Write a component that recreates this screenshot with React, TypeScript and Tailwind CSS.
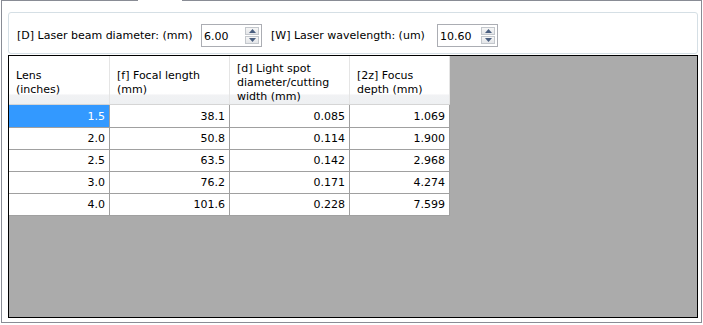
import React from "react";

const rows = [
  ["1.5", "38.1", "0.085", "1.069"],
  ["2.0", "50.8", "0.114", "1.900"],
  ["2.5", "63.5", "0.142", "2.968"],
  ["3.0", "76.2", "0.171", "4.274"],
  ["4.0", "101.6", "0.228", "7.599"],
];

const widths = ["w-[101px]", "w-[120px]", "w-[120px]", "w-[100px]"];

function Arrow({ up }: { up: boolean }) {
  return (
    <svg width="7" height="4" viewBox="0 0 7 4">
      {up ? (
        <polygon points="0,4 7,4 3.5,0" fill="#4a5f80" />
      ) : (
        <polygon points="0,0 7,0 3.5,4" fill="#4a5f80" />
      )}
    </svg>
  );
}

function Spin({ value }: { value: string }) {
  return (
    <div className="h-[23px] w-[61px] border border-[#abadb3] bg-white flex items-center pl-[2px] pr-[2px]">
      <div className="flex-1 leading-none pt-px">{value}</div>
      <div className="flex flex-col w-[14px] h-[17px]">
        <div className="h-[8px] border border-[#c3c7cc] bg-[linear-gradient(to_bottom,#f6f6f6,#e3e5e8)] flex items-center justify-center">
          <Arrow up />
        </div>
        <div className="h-px" />
        <div className="h-[8px] border border-[#c3c7cc] bg-[linear-gradient(to_bottom,#f6f6f6,#e3e5e8)] flex items-center justify-center">
          <Arrow up={false} />
        </div>
      </div>
    </div>
  );
}

export default function App() {
  return (
    <div className="w-[703px] h-[325px] bg-white relative font-['DejaVu_Sans',sans-serif] text-[11px] text-black">
      <div className="absolute top-0 left-[138px] w-[44px] h-px bg-white" />
      <div className="ml-px w-[701px] h-[323px] border border-[#898c95] flex flex-col pl-[6px] pt-[11px]">
        <div className="h-[42px] w-[690px] border border-[#d5dfe5] rounded-[3px] flex items-start pt-[11px] pl-[8px]">
          <div className="w-[184px] h-[23px] flex items-center pt-px">[D] Laser beam diameter: (mm)</div>
          <Spin value="6.00" />
          <div className="ml-[9px] w-[166px] h-[23px] flex items-center pt-px">[W] Laser wavelength: (um)</div>
          <Spin value="10.60" />
        </div>
        <div className="mt-px h-[263px] w-[690px] border border-black bg-[#ababab]">
          <div className="flex h-[49px] w-[441px] border-b border-[#d5d5d5] bg-[linear-gradient(to_bottom,#ffffff_0%,#ffffff_78%,#f1f2f4_82%,#eef0f2_100%)]">
            <div className={`${widths[0]} border-r border-[#e5e5e5] pl-[7px] pt-[5px] flex flex-col justify-center leading-[14px]`}>
              <div>Lens</div>
              <div>(inches)</div>
            </div>
            <div className={`${widths[1]} border-r border-[#e5e5e5] pl-[7px] pt-[5px] flex flex-col justify-center leading-[14px]`}>
              <div>[f] Focal length</div>
              <div>(mm)</div>
            </div>
            <div className={`${widths[2]} border-r border-[#e5e5e5] pl-[7px] pt-[5px] flex flex-col justify-center leading-[14px]`}>
              <div>[d] Light spot</div>
              <div>diameter/cutting</div>
              <div>width (mm)</div>
            </div>
            <div className={`${widths[3]} border-r border-[#e5e5e5] pl-[7px] pt-[5px] flex flex-col justify-center leading-[14px]`}>
              <div>[2z] Focus</div>
              <div>depth (mm)</div>
            </div>
          </div>
          {rows.map((r, i) => (
            <div key={i} className={`flex w-[441px] bg-white ${i === 0 ? "h-[23px]" : "h-[22px]"}`}>
              {r.map((c, j) => (
                <div
                  key={j}
                  className={`${widths[j]} border-r border-b border-[#a0a0a0] flex items-center justify-end pr-[4px] pt-[2px] ${
                    i === 0 && j === 0 ? "bg-[#3399ff] text-white" : ""
                  }`}
                >
                  {c}
                </div>
              ))}
            </div>
          ))}
        </div>
      </div>
    </div>
  );
}
